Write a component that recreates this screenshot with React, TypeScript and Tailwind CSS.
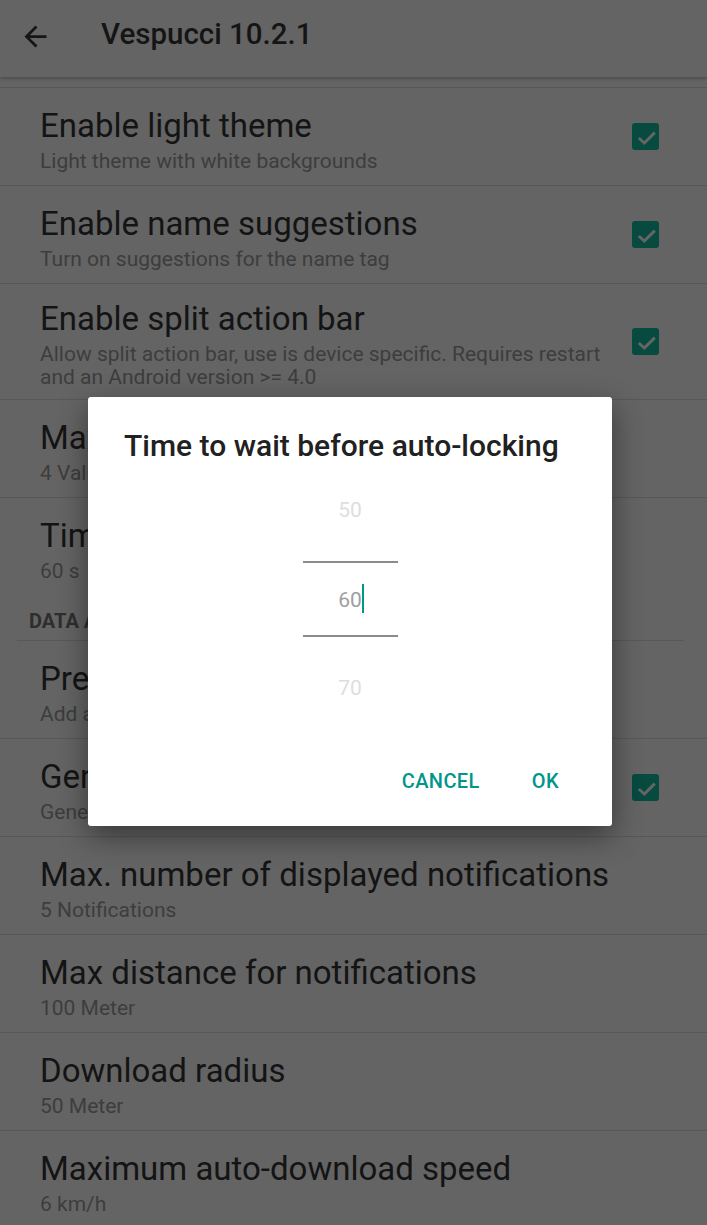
import React from 'react';

interface Pref {
  title: string;
  summary: string;
  checked?: boolean;
  last?: boolean;
}

const GENERAL: Pref[] = [
  { title: 'Enable light theme', summary: 'Light theme with white backgrounds', checked: true },
  { title: 'Enable name suggestions', summary: 'Turn on suggestions for the name tag', checked: true },
  {
    title: 'Enable split action bar',
    summary: 'Allow split action bar, use is device specific. Requires restart and an Android version >= 4.0',
    checked: true,
  },
  { title: 'Max. number of values', summary: '4 Values' },
  { title: 'Time to wait before auto-locking', summary: '60 s', last: true },
];

const DATA: Pref[] = [
  { title: 'Preset names', summary: 'Add a preset name' },
  { title: 'Generate notifications', summary: 'Generate notes', checked: true },
  { title: 'Max. number of displayed notifications', summary: '5 Notifications' },
  { title: 'Max distance for notifications', summary: '100 Meter' },
  { title: 'Download radius', summary: '50 Meter' },
  { title: 'Maximum auto-download speed', summary: '6 km/h' },
];

function CheckBox() {
  return (
    <div className="h-[27px] w-[27px] shrink-0 rounded-[3px] bg-[#064a40]">
      <svg width="27" height="27" viewBox="0 0 27 27">
        <polyline points="6.8,15 12.3,20 22.8,9.6" fill="none" stroke="#656565" strokeWidth="3" />
      </svg>
    </div>
  );
}

function PrefRow({ pref }: { pref: Pref }) {
  return (
    <div
      className={`flex min-h-[98px] items-center pl-10 pr-[48px] ${
        pref.last ? '' : 'border-b border-[#585858]'
      }`}
    >
      <div className="min-w-0 flex-1 pt-[17px] pb-[10px] pr-[16px]">
        <div className="whitespace-nowrap text-[33px] leading-[36px] text-[#141414]">{pref.title}</div>
        <div className="mt-[6px] text-[21px] leading-[23px] text-[#3d3d3d]">{pref.summary}</div>
      </div>
      {pref.checked && <CheckBox />}
    </div>
  );
}

function NumberPicker() {
  return (
    <div className="mx-auto flex w-[95px] flex-col items-center">
      <div className="flex h-[100px] items-center text-[21px] text-[#dedede]">50</div>
      <div className="flex h-[76px] w-full items-center justify-center border-y-2 border-[#8c8c8c] pt-[4px] text-[21px] text-[#9e9e9e]">
        <span className="relative">
          60
          <span className="absolute -right-[2px] top-[-1px] h-[29px] w-[2px] bg-[#009688]" />
        </span>
      </div>
      <div className="flex h-[100px] items-center pt-[3px] text-[21px] text-[#dedede]">70</div>
    </div>
  );
}

export default function App() {
  return (
    <div className="relative h-[1225px] w-[707px] overflow-hidden bg-[#646464] font-['Roboto',sans-serif]">
      {/* App bar */}
      <div className="relative z-10 flex h-[77px] bg-[#646464] shadow-[0_2px_3px_rgba(0,0,0,0.22)]">
        <svg className="ml-[19px] mt-[20px]" width="33" height="33" viewBox="0 0 24 24">
          <path d="M20 11H7.83l5.59-5.59L12 4l-8 8 8 8 1.41-1.41L7.83 13H20v-2z" fill="#151515" />
        </svg>
        <div className="ml-[49px] pt-[18px] text-[29.5px] font-medium leading-[33px] text-[#151515]">
          Vespucci 10.2.1
        </div>
      </div>

      {/* Preferences */}
      <div className="mt-[10px] border-t border-[#585858]">
        {GENERAL.map((p) => (
          <PrefRow key={p.title} pref={p} />
        ))}
        <div className="pl-[29px] pt-[13px] pb-[7px] text-[20px] font-bold leading-[24px] text-[#2e2e2e]">
          DATA AND NOTIFICATIONS
        </div>
        <div className="ml-[17px] mr-[23px] h-px bg-[#585858]" />
        {DATA.map((p) => (
          <PrefRow key={p.title} pref={p} />
        ))}
      </div>

      {/* Dialog */}
      <div className="absolute left-[88px] top-[397px] flex h-[429px] w-[524px] flex-col rounded-[3px] bg-white shadow-[0_10px_30px_rgba(0,0,0,0.45)]">
        <div className="pl-[36px] pt-[34px] text-[30px] font-medium leading-[30px] text-[#212121]">
          Time to wait before auto-locking
        </div>
        <NumberPicker />
        <div className="mt-[32px] flex justify-end gap-[52px] pr-[53px] text-[20px] font-medium leading-[24px] tracking-[0.4px] text-[#009688]">
          <span>CANCEL</span>
          <span>OK</span>
        </div>
      </div>
    </div>
  );
}
